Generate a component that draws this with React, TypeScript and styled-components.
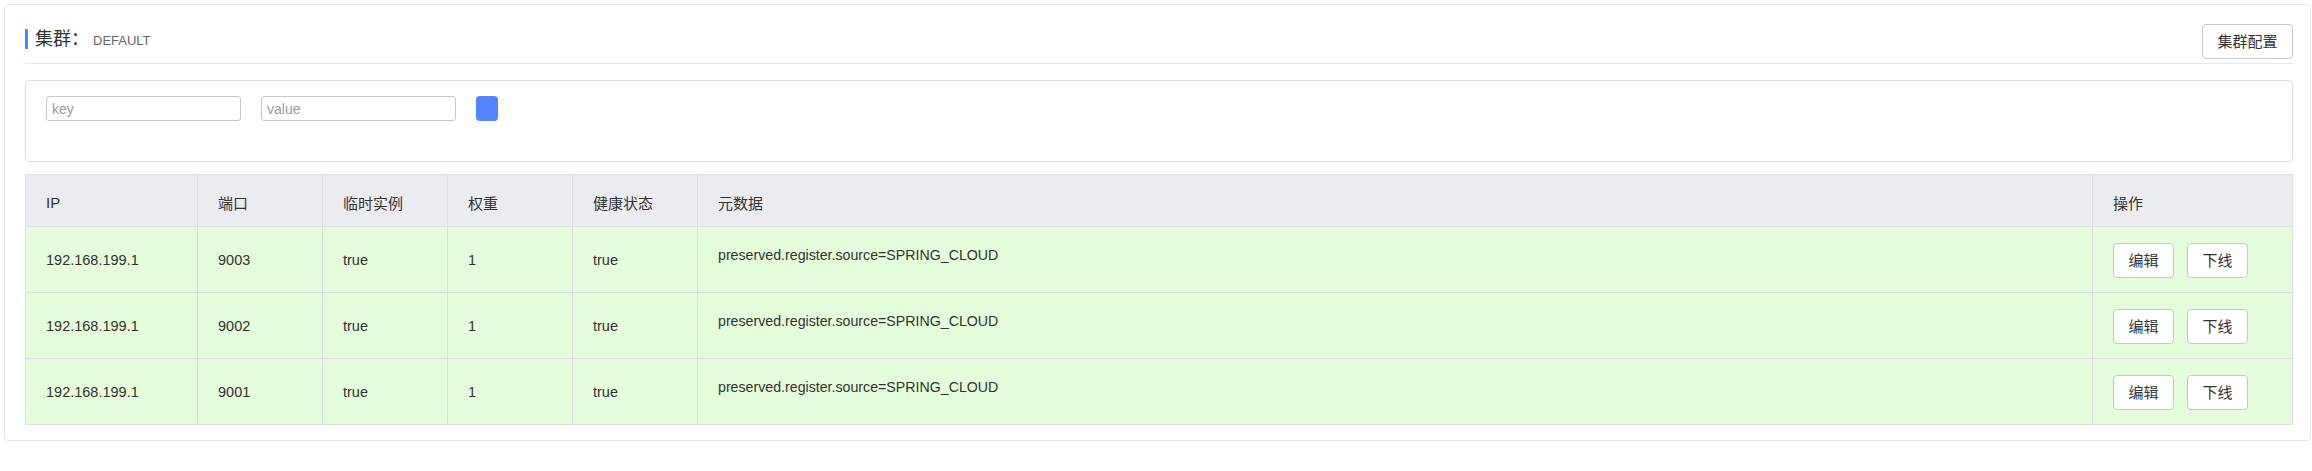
import React from 'react';
import styled, { createGlobalStyle } from 'styled-components';

const GlobalStyle = createGlobalStyle`
  html, body { margin: 0; padding: 0; background: #fff; overflow: hidden; }
  body { font-family: "Liberation Sans", "Noto Sans CJK SC", sans-serif; color: #333; }
  * { box-sizing: border-box; }
`;

const Card = styled.div`
  margin: 4px 0 0 4px;
  width: 2307px;
  border: 1px solid #e3e4e8;
  border-radius: 4px;
  padding: 0 17px 15px 20px;
  background: #fff;
`;

const Header = styled.div`
  display: flex;
  justify-content: space-between;
  align-items: flex-start;
  padding: 19px 0 4px;
  border-bottom: 1px solid #e6e7eb;
`;

const Title = styled.div`
  margin-top: 5px;
  height: 20px;
  border-left: 3px solid #5584ff;
  padding-left: 7px;
  display: flex;
  align-items: baseline;
  line-height: 20px;
`;

const TitleMain = styled.span`
  font-size: 18px;
  color: #333;
`;

const TitleSub = styled.span`
  font-size: 13px;
  color: #666;
  margin-left: 4px;
`;

const Button = styled.button`
  height: 35px;
  padding: 0 14.5px;
  border: 1px solid #c4c6cf;
  border-radius: 4px;
  background: #fff;
  color: #333;
  font-family: inherit;
  font-size: 15px;
  line-height: 33px;
  white-space: nowrap;
  cursor: pointer;
`;

const FilterPanel = styled.div`
  margin-top: 16px;
  border: 1px solid #dcdee3;
  border-radius: 4px;
  padding: 15px 20px 40px;
  display: flex;
  align-items: center;
  gap: 20px;
`;

const Input = styled.input`
  width: 195px;
  height: 25px;
  border: 1px solid #c4c6cf;
  border-radius: 3px;
  padding: 0 5px;
  font-family: inherit;
  font-size: 14px;
  color: #333;
  outline: none;
  &::placeholder { color: #999; }
`;

const SearchButton = styled.button`
  width: 22px;
  height: 25px;
  border: none;
  border-radius: 4px;
  background: #5584ff;
  padding: 0;
`;

const Table = styled.table`
  width: 100%;
  margin-top: 12px;
  border-collapse: collapse;
  table-layout: fixed;
  border: 1px solid #dcdee3;
`;

const HeadRow = styled.tr`
  height: 52px;
`;

const BodyRow = styled.tr`
  height: 66px;
`;

const Th = styled.th`
  background: #ebecf0;
  border: 1px solid #dcdee3;
  text-align: left;
  font-weight: normal;
  font-size: 15px;
  color: #333;
  padding: 3px 20px 0;
`;

const Td = styled.td<{ $meta?: boolean }>`
  background: #e4fdda;
  border: 1px solid #dcdee3;
  font-size: ${p => (p.$meta ? '14.2px' : '14.5px')};
  color: #333;
  padding: ${p => (p.$meta ? '0 20px 10px' : '1px 20px 0')};
  white-space: nowrap;
`;

const Actions = styled.div`
  display: flex;
  gap: 13px;
`;

const rows = [
  { ip: '192.168.199.1', port: '9003' },
  { ip: '192.168.199.1', port: '9002' },
  { ip: '192.168.199.1', port: '9001' },
];

export default function App() {
  return (
    <>
      <GlobalStyle />
      <Card>
        <Header>
          <Title>
            <TitleMain>集群：</TitleMain>
            <TitleSub>DEFAULT</TitleSub>
          </Title>
          <Button>集群配置</Button>
        </Header>
        <FilterPanel>
          <Input placeholder="key" />
          <Input placeholder="value" />
          <SearchButton />
        </FilterPanel>
        <Table>
          <colgroup>
            <col style={{ width: 172 }} />
            <col style={{ width: 125 }} />
            <col style={{ width: 125 }} />
            <col style={{ width: 125 }} />
            <col style={{ width: 125 }} />
            <col style={{ width: 1395 }} />
            <col />
          </colgroup>
          <thead>
            <HeadRow>
              <Th>IP</Th>
              <Th>端口</Th>
              <Th>临时实例</Th>
              <Th>权重</Th>
              <Th>健康状态</Th>
              <Th>元数据</Th>
              <Th>操作</Th>
            </HeadRow>
          </thead>
          <tbody>
            {rows.map(r => (
              <BodyRow key={r.port}>
                <Td>{r.ip}</Td>
                <Td>{r.port}</Td>
                <Td>true</Td>
                <Td>1</Td>
                <Td>true</Td>
                <Td $meta>preserved.register.source=SPRING_CLOUD</Td>
                <Td>
                  <Actions>
                    <Button>编辑</Button>
                    <Button>下线</Button>
                  </Actions>
                </Td>
              </BodyRow>
            ))}
          </tbody>
        </Table>
      </Card>
    </>
  );
}
